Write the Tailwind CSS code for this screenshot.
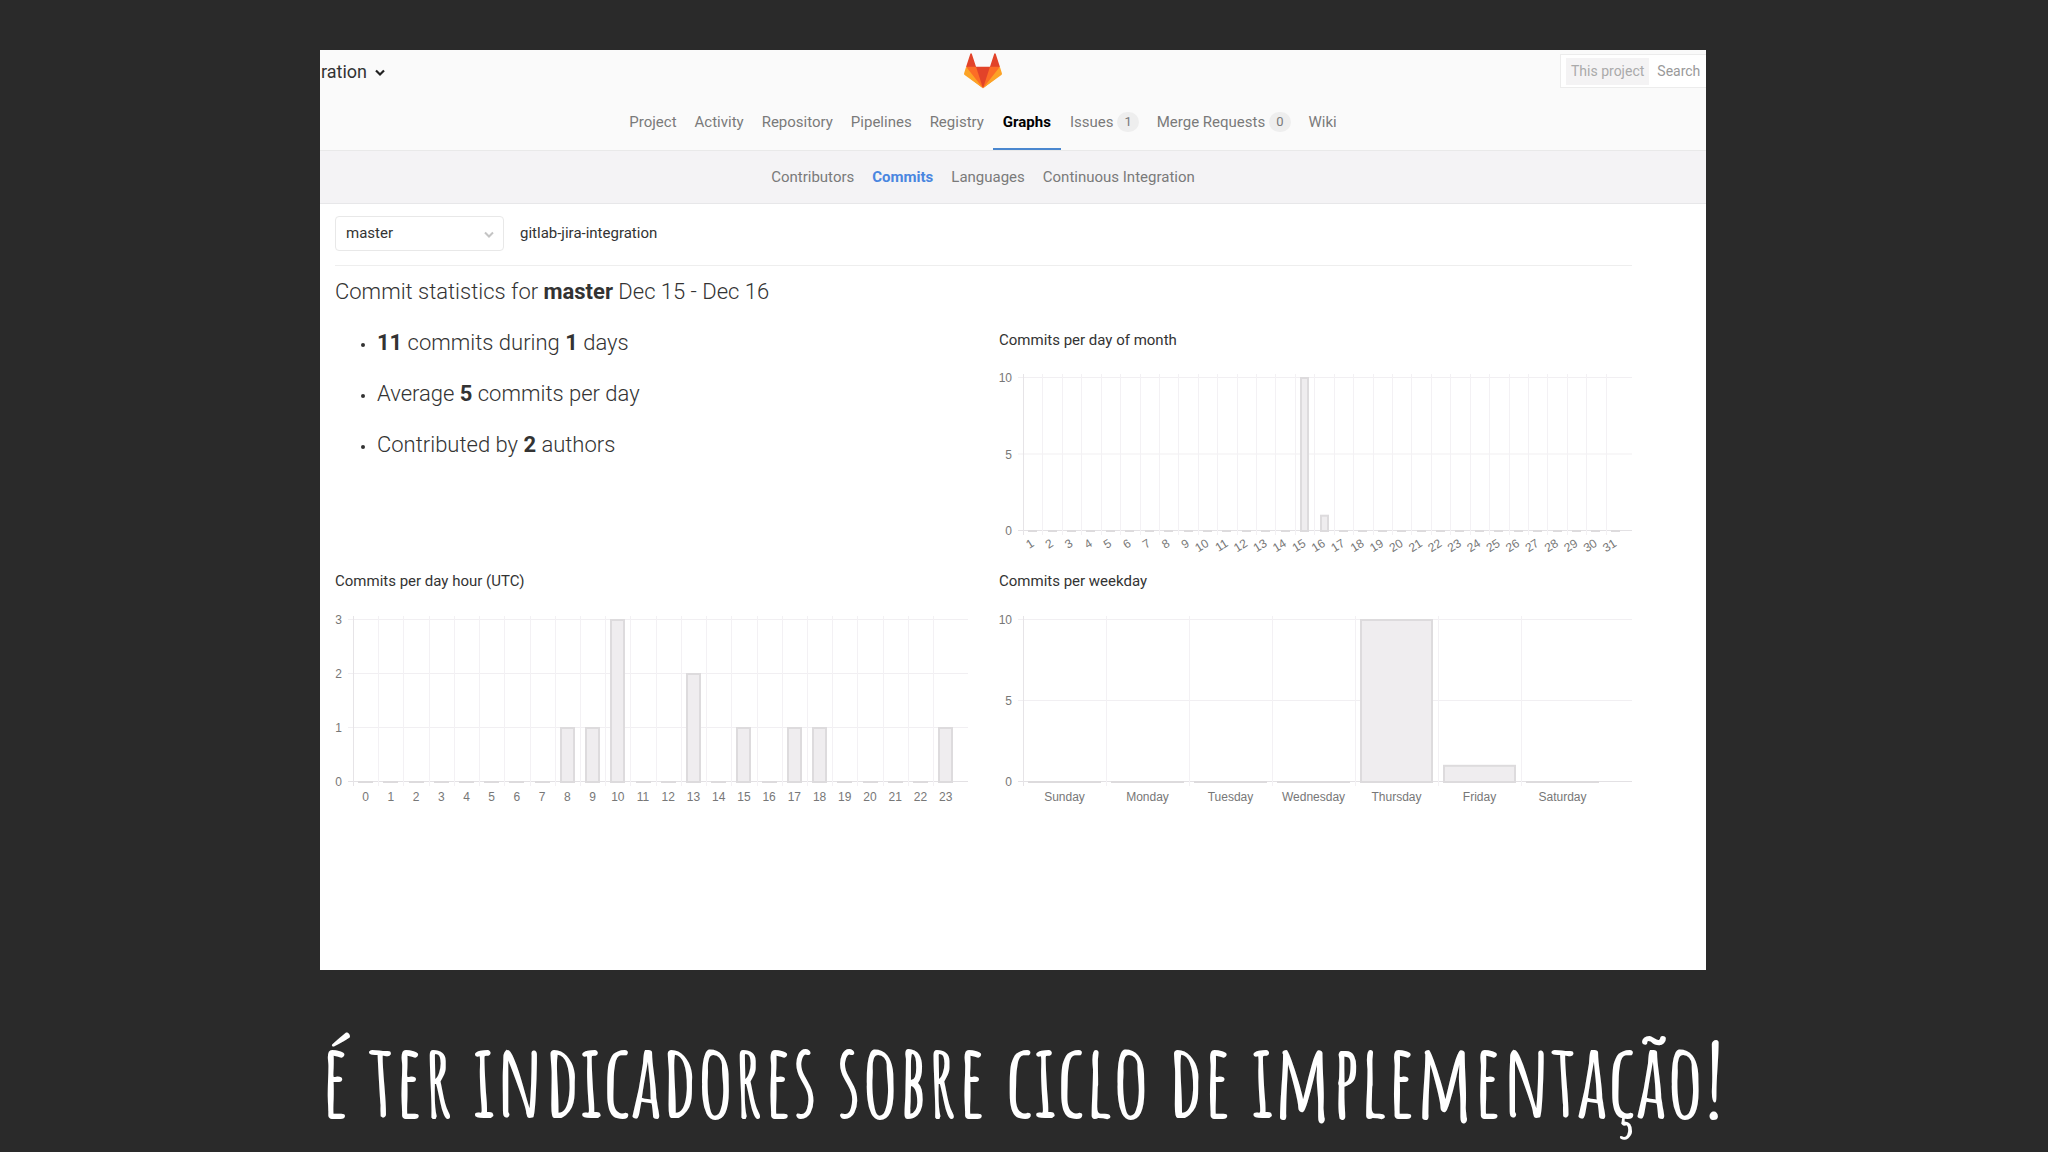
<!DOCTYPE html>
<html lang="pt-BR">
<head>
    <meta charset="UTF-8">
    <meta name="viewport" content="width=device-width, initial-scale=1.0">
    <title>Commits · Graphs · gitlab-jira-integration</title>
    <script src="https://cdn.jsdelivr.net/npm/@tailwindcss/browser@4"></script>
</head>
<body class="min-h-screen overflow-x-hidden bg-[#2a2a2a] font-['Roboto',sans-serif] text-[15px] text-[#333]">

    <!-- Browser panel -->
    <main class="mt-[50px] mr-[342px] ml-80 overflow-hidden bg-white">

        <header class="bg-[#fafafa]">
            <div class="mr-[60px] grid h-[42px] grid-cols-3 items-center">
                <button type="button" class="flex items-center gap-2 pl-px text-[18px] text-[#333]">
                    ration
                    <svg class="mt-1 h-2 w-2.5" viewBox="0 0 10 8" fill="none" stroke="#222" stroke-width="2.2"><path d="M1 1.5l4 4 4-4"/></svg>
                </button>
                <a href="#" aria-label="Dashboard" class="mx-auto">
                    <svg class="h-[38px] w-[38px]" viewBox="0 0 36 36">
                        <path fill="#e24329" d="M2 14l9.38 9v-9l-4-12.28c-.205-.632-1.176-.632-1.38 0z"/>
                        <path fill="#e24329" d="M34 14l-9.38 9v-9l4-12.28c.205-.632 1.176-.632 1.38 0z"/>
                        <path fill="#e24329" d="M18 34.38L3 14h30z"/>
                        <path fill="#fc6d26" d="M18 34.38L11.38 14H2l4 11z"/>
                        <path fill="#fc6d26" d="M18 34.38L24.62 14H34l-4 11z"/>
                        <path fill="#fca326" d="M2 14L.1 20.16c-.18.565 0 1.2.5 1.56L18 34.38z"/>
                        <path fill="#fca326" d="M34 14l1.9 6.16c.18.565 0 1.2-.5 1.56L18 34.38z"/>
                    </svg>
                </a>
                <form class="-mr-[60px] ml-auto flex h-[34px] w-[146px] items-center gap-2 border border-r-0 border-[#ececec] bg-white pl-[5px] text-[14px]">
                    <label for="search" class="shrink-0 bg-[#f4f3f4] px-[5px] leading-[27px] text-[#aaa]">This project</label>
                    <input id="search" type="text" placeholder="Search" class="w-full min-w-0 outline-none placeholder:text-[#999]">
                </form>
            </div>

            <nav class="border-b border-[#e9e9e9] pr-[60px]">
                <div class="flex h-[58px] justify-center text-[#7a7a7a]">
                    <a href="#" class="flex items-center px-[9px] pt-0.5">Project</a>
                    <a href="#" class="flex items-center px-[9px] pt-0.5">Activity</a>
                    <a href="#" class="flex items-center px-[9px] pt-0.5">Repository</a>
                    <a href="#" class="flex items-center px-[9px] pt-0.5">Pipelines</a>
                    <a href="#" class="flex items-center px-[9px] pt-0.5">Registry</a>
                    <a href="#" class="flex items-center border-b-2 border-[#4a87cf] px-2.5 pt-1 font-bold text-black">Graphs</a>
                    <a href="#" class="flex items-center gap-1 px-[9px] pt-0.5">Issues <span class="rounded-full bg-[#eee] px-[7px] text-[13px] leading-5">1</span></a>
                    <a href="#" class="flex items-center gap-1 px-[9px] pt-0.5">Merge Requests <span class="rounded-full bg-[#eee] px-[7px] text-[13px] leading-5">0</span></a>
                    <a href="#" class="flex items-center px-[9px] pt-0.5">Wiki</a>
                </div>
            </nav>
        </header>

        <nav class="border-b border-[#e7e7e9] bg-[#f4f3f5] pr-[60px]">
            <div class="flex h-[52px] items-center justify-center text-[#7a7a7a]">
                <a href="#" class="px-[9px]">Contributors</a>
                <a href="#" class="px-[9px] font-bold text-[#4a86e0]">Commits</a>
                <a href="#" class="px-[9px]">Languages</a>
                <a href="#" class="px-[9px]">Continuous Integration</a>
            </div>
        </nav>

        <div class="mr-[74px] ml-[15px] pb-[161px]">
            <div class="flex items-center gap-4 border-b border-[#eee] pt-3 pb-3.5">
                <div class="relative">
                    <select aria-label="Branch" class="h-[35px] w-[169px] appearance-none rounded-sm border border-[#e8e8e8] bg-white px-2.5 text-[#333]">
                        <option>master</option>
                    </select>
                    <svg class="pointer-events-none absolute top-[15px] right-2.5 h-2 w-2.5" viewBox="0 0 10 8" fill="none" stroke="#c4c4c4" stroke-width="2"><path d="M1 1.5l4 4 4-4"/></svg>
                </div>
                <a href="#">gitlab-jira-integration</a>
            </div>

            <h1 class="mt-3 text-[22px] leading-7 font-light">Commit statistics for <strong class="font-bold">master</strong> Dec 15 - Dec 16</h1>

            <div class="mt-5 grid grid-cols-2 gap-x-[31px]">
                <ul class="space-y-[17px] pl-[26px] text-[22px] leading-[34px] font-light">
                    <li class="flex items-center gap-3 before:mt-1 before:size-1 before:rounded-full before:bg-[#333]"><span><strong class="font-bold">11</strong> commits during <strong class="font-bold">1</strong> days</span></li>
                    <li class="flex items-center gap-3 before:mt-1 before:size-1 before:rounded-full before:bg-[#333]"><span>Average <strong class="font-bold">5</strong> commits per day</span></li>
                    <li class="flex items-center gap-3 before:mt-1 before:size-1 before:rounded-full before:bg-[#333]"><span>Contributed by <strong class="font-bold">2</strong> authors</span></li>
                </ul>
                <section>
                    <h2 class="leading-7">Commits per day of month</h2>
                    <svg id="month-chart" class="w-full" viewBox="0 0 633 213"></svg>
                </section>
                <section>
                    <h2 class="leading-7">Commits per day hour (UTC)</h2>
                    <svg id="hour-chart" class="w-full" viewBox="0 0 633 214"></svg>
                </section>
                <section>
                    <h2 class="leading-7">Commits per weekday</h2>
                    <svg id="weekday-chart" class="w-full" viewBox="0 0 633 214"></svg>
                </section>
            </div>
        </div>
    </main>

    <p class="mt-[52px] mb-0 pl-[321px] font-['Amatic_SC','Liberation_Sans_Narrow','DejaVu_Sans_Condensed',sans-serif] text-[102px] leading-[114px] font-bold whitespace-nowrap text-white">é ter indicadores sobre ciclo de implementação!</p>

    <script>
        // Bar chart: grid, value axis, bars and category labels
        function drawChart(id, o) {
            const height = o.bottom - o.top;
            let out = '';

            for (let v = 0; v <= o.max; v += o.step) {
                const y = o.bottom - height * v / o.max;
                out += `<rect x="${o.left - 5}" y="${y}" width="${633 - o.left + 5}" height="1" fill="${v ? '#f1eff2' : '#e3e1e4'}"/>`;
                out += `<text x="${o.left - 11}" y="${y + 5}" text-anchor="end">${v}</text>`;
            }

            o.labels.forEach((label, i) => {
                const x = o.left + i * o.pitch;
                const cx = x + o.pitch / 2;
                out += `<rect x="${Math.round(x)}" y="${o.top - 3}" width="1" height="${height + 8}" fill="${i ? '#f3f1f4' : '#e6e4e7'}"/>`;

                const value = o.values[i] || 0;
                const bx = Math.round(cx - o.bar / 2);
                if (value) {
                    const h = height * value / o.max;
                    out += `<rect x="${bx + 1}" y="${o.bottom - h + 1}" width="${o.bar - 2}" height="${h}" fill="#efedef" stroke="#dddbdd" stroke-width="2"/>`;
                } else {
                    out += `<rect x="${bx}" y="${o.bottom}" width="${o.bar}" height="2" fill="#dddbdd"/>`;
                }

                if (o.rotate) {
                    out += `<text transform="translate(${cx} ${o.bottom + 12}) rotate(-32)" text-anchor="end" y="4">${label}</text>`;
                } else {
                    out += `<text x="${cx}" y="${o.bottom + 20}" text-anchor="middle">${label}</text>`;
                }
            });

            document.getElementById(id).innerHTML = `<g font-family="Liberation Sans, Arial, sans-serif" font-size="12" fill="#777">${out}</g>`;
        }

        drawChart('month-chart', {
            left: 24, top: 23, bottom: 176, pitch: 19.42, bar: 9, max: 10, step: 5, rotate: true,
            labels: Array.from({ length: 31 }, (_, i) => i + 1),
            values: { 14: 10, 15: 1 }
        });
        drawChart('hour-chart', {
            left: 18, top: 24, bottom: 186, pitch: 25.22, bar: 15, max: 3, step: 1,
            labels: Array.from({ length: 24 }, (_, i) => i),
            values: { 8: 1, 9: 1, 10: 3, 13: 2, 15: 1, 17: 1, 18: 1, 23: 1 }
        });
        drawChart('weekday-chart', {
            left: 24, top: 24, bottom: 186, pitch: 83, bar: 73, max: 10, step: 5,
            labels: ['Sunday', 'Monday', 'Tuesday', 'Wednesday', 'Thursday', 'Friday', 'Saturday'],
            values: { 4: 10, 5: 1 }
        });
    </script>
</body>
</html>
